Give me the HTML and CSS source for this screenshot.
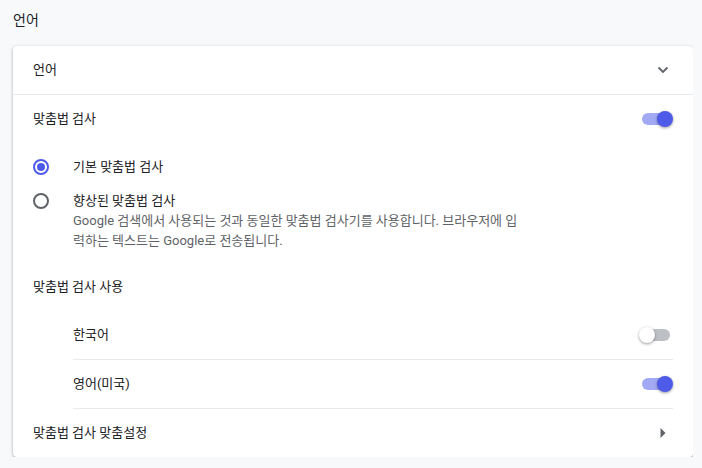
FILE: index.html
```html
<!DOCTYPE html>
<html lang="ko">
<head>
<meta charset="utf-8">
<title>언어</title>
<link rel="stylesheet" href="styles.css">
</head>
<body>
<h2 class="page-title">언어</h2>
<section class="card">
  <div class="row row-divider">
    <span class="label">언어</span>
    <svg class="icon" width="20" height="20" viewBox="0 0 20 20"><polyline points="5.5,7.5 10,12 14.5,7.5" fill="none" stroke="#5f6368" stroke-width="1.8"/></svg>
  </div>
  <div class="row">
    <span class="label">맞춤법 검사</span>
    <span class="toggle on"><span class="bar"></span><span class="knob"></span></span>
  </div>
  <div class="radio-group">
    <div class="radio-item">
      <span class="radio checked"></span>
      <div class="radio-text">
        <div class="label">기본 맞춤법 검사</div>
      </div>
    </div>
    <div class="radio-item">
      <span class="radio"></span>
      <div class="radio-text">
        <div class="label">향상된 맞춤법 검사</div>
        <div class="secondary">Google 검색에서 사용되는 것과 동일한 맞춤법 검사기를 사용합니다. 브라우저에 입력하는 텍스트는 Google로 전송됩니다.</div>
      </div>
    </div>
  </div>
  <div class="row">
    <span class="label">맞춤법 검사 사용</span>
  </div>
  <div class="lang-list">
    <div class="lang-row">
      <span class="label">한국어</span>
      <span class="toggle"><span class="bar"></span><span class="knob"></span></span>
    </div>
    <div class="lang-row">
      <span class="label">영어(미국)</span>
      <span class="toggle on"><span class="bar"></span><span class="knob"></span></span>
    </div>
  </div>
  <div class="row">
    <span class="label">맞춤법 검사 맞춤설정</span>
    <svg class="icon" width="20" height="20" viewBox="0 0 20 20"><polygon points="7.5,5 12.5,10 7.5,15" fill="#5f6368"/></svg>
  </div>
</section>
</body>
</html>
```
FILE: styles.css
```css
html, body {
  margin: 0;
  padding: 0;
  background: #f8f9fa;
}
body {
  font-family: Roboto, "Noto Sans CJK KR", sans-serif;
  font-size: 13px;
  color: #202124;
  width: 693px;
}
.page-title {
  margin: 0;
  padding: 10px 13px 16px;
  font-size: 14px;
  font-weight: 400;
  line-height: 20px;
  color: #202124;
}
.card {
  margin-left: 13px;
  background: #fff;
  border-radius: 4px;
  box-shadow: 0 1px 2px rgba(60, 64, 67, 0.3), 0 1px 3px 1px rgba(60, 64, 67, 0.15);
}
.row {
  height: 48px;
  display: flex;
  align-items: center;
  justify-content: space-between;
  padding: 0 20px;
}
.row-divider {
  border-bottom: 1px solid #e8eaed;
}
.label {
  line-height: 20px;
}
.icon {
  display: block;
}
.radio-group {
  padding: 14px 20px 12px;
  display: flex;
  flex-direction: column;
  gap: 14px;
}
.radio-item {
  display: flex;
  align-items: flex-start;
  gap: 24px;
}
.radio {
  box-sizing: border-box;
  width: 16px;
  height: 16px;
  margin-top: 2px;
  border: 2px solid #5f6368;
  border-radius: 50%;
  display: flex;
  align-items: center;
  justify-content: center;
  flex: none;
}
.radio.checked {
  border-color: #4e5ae8;
}
.radio.checked::after {
  content: "";
  width: 8px;
  height: 8px;
  border-radius: 50%;
  background: #4e5ae8;
}
.secondary {
  color: #5f6368;
  line-height: 20px;
  max-width: 452px;
}
.lang-list {
  margin: 0 20px 0 60px;
}
.lang-row {
  height: 48px;
  display: flex;
  align-items: center;
  justify-content: space-between;
  border-bottom: 1px solid #e8eaed;
}
.toggle {
  position: relative;
  width: 31px;
  height: 16px;
  flex: none;
}
.toggle .bar {
  position: absolute;
  left: 0;
  top: 2px;
  width: 28px;
  height: 12px;
  border-radius: 6px;
  background: #bdc1c6;
}
.toggle .knob {
  position: absolute;
  top: 0;
  left: -3px;
  width: 16px;
  height: 16px;
  border-radius: 50%;
  background: #fff;
  box-shadow: 0 1px 3px rgba(0, 0, 0, 0.4);
}
.toggle.on .bar {
  background: #a3aaf4;
}
.toggle.on .knob {
  left: 15px;
  background: #4e5ae8;
}
```
